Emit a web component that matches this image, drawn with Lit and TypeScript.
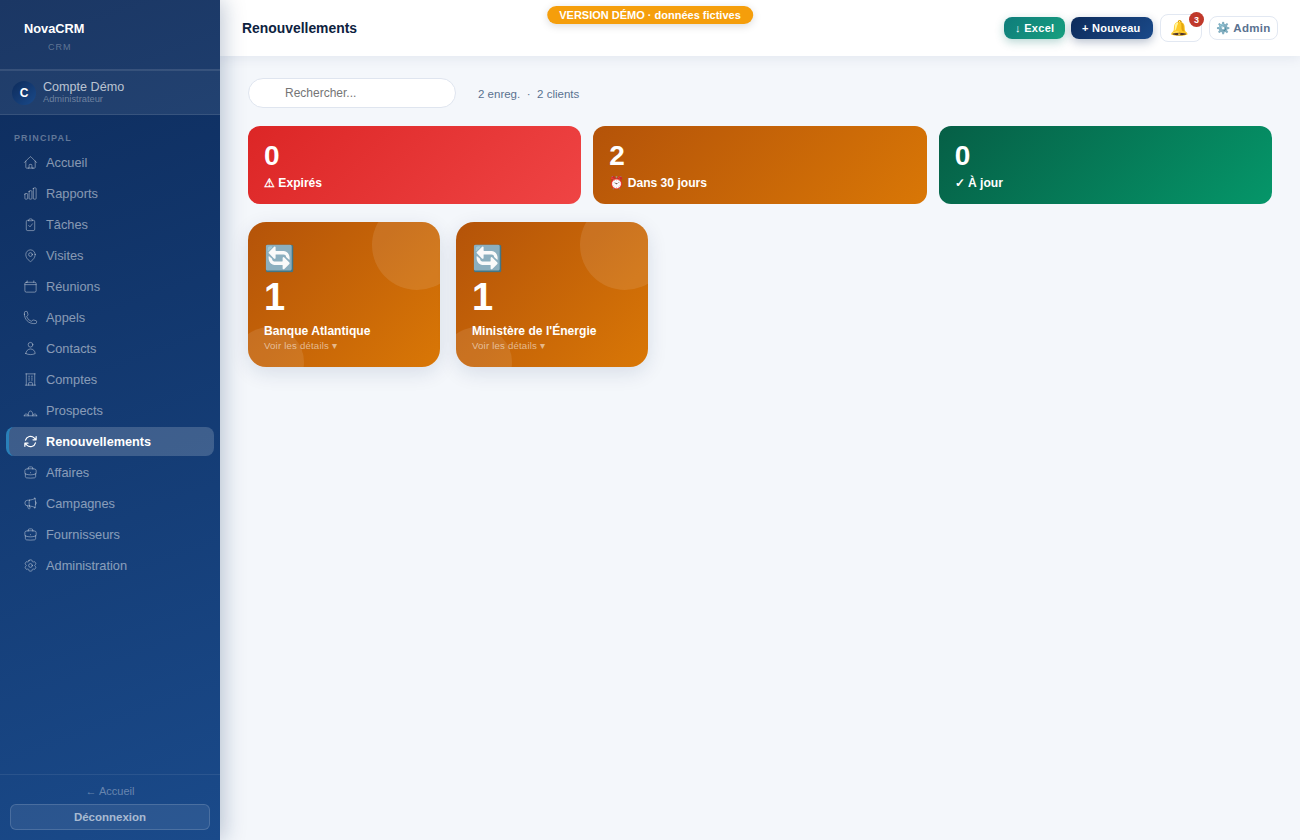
import { LitElement, html, css } from 'lit';
import { customElement } from 'lit/decorators.js';

const ICONS: Record<string, string> = {
  home: 'M2.25 12l8.954-8.955c.44-.439 1.152-.439 1.591 0L21.75 12M4.5 9.75v10.125c0 .621.504 1.125 1.125 1.125H9.75v-4.875c0-.621.504-1.125 1.125-1.125h2.25c.621 0 1.125.504 1.125 1.125V21h4.125c.621 0 1.125-.504 1.125-1.125V9.75M8.25 21h8.25',
  chart: 'M3 13.125C3 12.504 3.504 12 4.125 12h2.25c.621 0 1.125.504 1.125 1.125v6.75C7.5 20.496 6.996 21 6.375 21h-2.25A1.125 1.125 0 013 19.875v-6.75zM9.75 8.625c0-.621.504-1.125 1.125-1.125h2.25c.621 0 1.125.504 1.125 1.125v11.25c0 .621-.504 1.125-1.125 1.125h-2.25a1.125 1.125 0 01-1.125-1.125V8.625zM16.5 4.125c0-.621.504-1.125 1.125-1.125h2.25C20.496 3 21 3.504 21 4.125v15.75c0 .621-.504 1.125-1.125 1.125h-2.25a1.125 1.125 0 01-1.125-1.125V4.125z',
  clipboard: 'M9 13.5l2.25 2.25L15 11M9 5.25H7.5A2.25 2.25 0 005.25 7.5v12A2.25 2.25 0 007.5 21.75h9a2.25 2.25 0 002.25-2.25v-12A2.25 2.25 0 0016.5 5.25H15M9 5.25A2.25 2.25 0 0111.25 3h1.5A2.25 2.25 0 0115 5.25v.75H9z',
  pin: 'M15 10.5a3 3 0 11-6 0 3 3 0 016 0zM19.5 10.5c0 7.142-7.5 11.25-7.5 11.25S4.5 17.642 4.5 10.5a7.5 7.5 0 1115 0z',
  calendar: 'M6.75 3v2.25M17.25 3v2.25M3 9h18M5.25 5.25h13.5A2.25 2.25 0 0121 7.5v11.25A2.25 2.25 0 0118.75 21H5.25A2.25 2.25 0 013 18.75V7.5a2.25 2.25 0 012.25-2.25z',
  phone: 'M2.25 6.75c0 8.284 6.716 15 15 15h2.25a2.25 2.25 0 002.25-2.25v-1.372c0-.516-.351-.966-.852-1.091l-4.423-1.106c-.44-.11-.902.055-1.173.417l-.97 1.293c-.282.376-.769.542-1.21.38a12.035 12.035 0 01-7.143-7.143c-.162-.441.004-.928.38-1.21l1.293-.97c.363-.271.527-.734.417-1.173L6.963 3.102a1.125 1.125 0 00-1.091-.852H4.5A2.25 2.25 0 002.25 4.5v2.25z',
  user: 'M15.75 6a3.75 3.75 0 11-7.5 0 3.75 3.75 0 017.5 0zM4.501 20.118a7.5 7.5 0 0114.998 0A17.933 17.933 0 0112 21.75c-2.676 0-5.216-.584-7.499-1.632z',
  building: 'M3.75 21h16.5M4.5 3h15M5.25 3v18m13.5-18v18M9 6.75h1.5m-1.5 3h1.5m-1.5 3h1.5m3-6H15m-1.5 3H15m-1.5 3H15M9 21v-3.375c0-.621.504-1.125 1.125-1.125h3.75c.621 0 1.125.504 1.125 1.125V21',
  prospects: 'M2 20.5c0-1.8 1.3-2.9 3-2.9 1.2 0 2.2.4 3.2 1.2M22 20.5c0-1.8-1.3-2.9-3-2.9-1.2 0-2.2.4-3.2 1.2M8.2 20.5c0-5 1.5-7.7 3.8-7.7s3.8 2.7 3.8 7.7M2 20.5h20',
  refresh: 'M16.023 9.348h4.992v-.001M2.985 19.644v-4.992m0 0h4.992m-4.993 0l3.181 3.183a8.25 8.25 0 0013.803-3.7M4.031 9.865a8.25 8.25 0 0113.803-3.7l3.181 3.182m0-4.991v4.99',
  briefcase: 'M20.25 14.15v4.25c0 1.094-.787 2.036-1.872 2.18-2.087.277-4.216.42-6.378.42s-4.291-.143-6.378-.42c-1.085-.144-1.872-1.086-1.872-2.18v-4.25m16.5 0a2.18 2.18 0 00.75-1.661V8.706c0-1.081-.768-2.015-1.837-2.175a48.114 48.114 0 00-3.413-.387m4.5 8.006c-.194.165-.42.295-.673.38A23.978 23.978 0 0112 15.75c-2.648 0-5.195-.429-7.577-1.22a2.016 2.016 0 01-.673-.38m0 0A2.18 2.18 0 013 12.489V8.706c0-1.081.768-2.015 1.837-2.175a48.111 48.111 0 013.413-.387m7.5 0V5.25A2.25 2.25 0 0013.5 3h-3a2.25 2.25 0 00-2.25 2.25v.894m7.5 0a48.667 48.667 0 00-7.5 0M12 12.75h.008v.008H12v-.008z',
  megaphone: 'M10.34 15.84c-.688-.06-1.386-.09-2.09-.09H7.5a4.5 4.5 0 110-9h.75c.704 0 1.402-.03 2.09-.09m0 9.18c.253.962.584 1.892.985 2.783.247.55.06 1.21-.463 1.511l-.657.38c-.551.318-1.26.117-1.527-.461a20.845 20.845 0 01-1.44-4.282m3.102.069a18.03 18.03 0 01-.59-4.59c0-1.586.205-3.124.59-4.59m0 9.18a23.848 23.848 0 018.835 2.535M10.34 6.66a23.847 23.847 0 008.835-2.535m0 0A23.74 23.74 0 0018.795 3m.38 1.125a23.91 23.91 0 011.014 5.395m-1.014 8.855c-.118.38-.245.754-.38 1.125m.38-1.125a23.91 23.91 0 001.014-5.395m0-3.46c.495.413.811 1.035.811 1.73 0 .695-.316 1.317-.811 1.73m0-3.46a24.347 24.347 0 010 3.46',
  cog: 'M9.594 3.94c.09-.542.56-.94 1.11-.94h2.593c.55 0 1.02.398 1.11.94l.213 1.281c.063.374.313.686.645.87.074.04.147.083.22.127.324.196.72.257 1.075.124l1.217-.456a1.125 1.125 0 011.37.49l1.296 2.247a1.125 1.125 0 01-.26 1.431l-1.003.827c-.293.24-.438.613-.431.992a6.759 6.759 0 010 .255c-.007.378.138.75.43.99l1.005.828c.424.35.534.954.26 1.43l-1.298 2.247a1.125 1.125 0 01-1.369.491l-1.217-.456c-.355-.133-.75-.072-1.076.124a6.57 6.57 0 01-.22.128c-.331.183-.581.495-.644.869l-.213 1.28c-.09.543-.56.941-1.11.941h-2.594c-.55 0-1.02-.398-1.11-.94l-.213-1.281c-.062-.374-.312-.686-.644-.87a6.52 6.52 0 01-.22-.127c-.325-.196-.72-.257-1.076-.124l-1.217.456a1.125 1.125 0 01-1.369-.49l-1.297-2.247a1.125 1.125 0 01.26-1.431l1.004-.827c.292-.24.437-.613.43-.992a6.932 6.932 0 010-.255c.007-.378-.138-.75-.43-.99l-1.004-.828a1.125 1.125 0 01-.26-1.43l1.297-2.247a1.125 1.125 0 011.37-.491l1.216.456c.356.133.751.072 1.076-.124.072-.044.146-.087.22-.128.332-.183.582-.495.644-.869l.214-1.281zM15 12a3 3 0 11-6 0 3 3 0 016 0z',
};

const NAV = [
  ['Accueil', 'home'],
  ['Rapports', 'chart'],
  ['Tâches', 'clipboard'],
  ['Visites', 'pin'],
  ['Réunions', 'calendar'],
  ['Appels', 'phone'],
  ['Contacts', 'user'],
  ['Comptes', 'building'],
  ['Prospects', 'prospects'],
  ['Renouvellements', 'refresh'],
  ['Affaires', 'briefcase'],
  ['Campagnes', 'megaphone'],
  ['Fournisseurs', 'briefcase'],
  ['Administration', 'cog'],
];

const STATS = [
  ['0', '⚠ Expirés', 'red'],
  ['2', '⏰ Dans 30 jours', 'amber'],
  ['0', '✓ À jour', 'green'],
];

const CLIENTS = [
  ['1', 'Banque Atlantique'],
  ['1', "Ministère de l'Énergie"],
];

@customElement('app-root')
export class AppRoot extends LitElement {
  static styles = css`
    :host {
      display: flex;
      height: 100vh;
      background: #f4f7fb;
      font-family: 'Liberation Sans', Arial, sans-serif;
      color: #0f2447;
      overflow: hidden;
      position: relative;
    }

    * {
      box-sizing: border-box;
    }

    .sidebar {
      width: 220px;
      flex: none;
      display: flex;
      flex-direction: column;
      background: linear-gradient(160deg, #0d2b5b 0%, #1a4a8a 100%);
      box-shadow: 4px 0 20px rgba(13, 43, 91, 0.25);
      z-index: 2;
    }

    .brand {
      height: 70px;
      padding: 21px 24px 0;
      background: rgba(255, 255, 255, 0.06);
      border-bottom: 1px solid rgba(255, 255, 255, 0.12);
    }

    .brand-name {
      font-size: 12.8px;
      line-height: 15px;
      font-weight: 700;
      color: #fff;
    }

    .brand-sub {
      margin: 6px 0 0 24px;
      font-size: 9px;
      line-height: 11px;
      letter-spacing: 1px;
      color: rgba(255, 255, 255, 0.3);
    }

    .account {
      height: 45px;
      display: flex;
      align-items: center;
      gap: 7px;
      padding: 0 12px;
      background: rgba(255, 255, 255, 0.08);
      border-top: 1px solid rgba(255, 255, 255, 0.1);
      border-bottom: 1px solid rgba(255, 255, 255, 0.1);
    }

    .avatar {
      width: 24px;
      height: 24px;
      border-radius: 50%;
      flex: none;
      display: flex;
      align-items: center;
      justify-content: center;
      font-size: 12px;
      font-weight: 700;
      color: #fff;
      background: linear-gradient(135deg, #0d2b5b, #1a4a8a);
    }

    .account-name {
      font-size: 12.6px;
      line-height: 13px;
      color: rgba(255, 255, 255, 0.7);
    }

    .account-role {
      font-size: 9.3px;
      line-height: 10px;
      color: rgba(255, 255, 255, 0.35);
    }

    .section {
      padding: 18px 14px 4px;
      font-size: 9px;
      line-height: 11px;
      font-weight: 700;
      letter-spacing: 1.1px;
      color: rgba(255, 255, 255, 0.35);
    }

    nav {
      flex: 1;
      display: flex;
      flex-direction: column;
      gap: 2px;
      padding: 0 6px;
    }

    .item {
      height: 29px;
      display: flex;
      align-items: center;
      gap: 8px;
      padding: 0 17px;
      border-radius: 8px;
      font-size: 12.8px;
      color: rgba(255, 255, 255, 0.5);
    }

    .item svg {
      width: 15px;
      height: 15px;
      flex: none;
      fill: none;
      stroke: currentColor;
      stroke-width: 1.6;
      stroke-linecap: round;
      stroke-linejoin: round;
      opacity: 0.8;
    }

    .item.active {
      background: rgba(255, 255, 255, 0.18);
      border-left: 3px solid #2980b9;
      padding-left: 14px;
      font-size: 12.7px;
      color: #fff;
      font-weight: 700;
    }

    .item.active svg {
      opacity: 1;
      stroke-width: 2;
    }

    .foot {
      border-top: 1px solid rgba(255, 255, 255, 0.08);
      padding: 10px;
      text-align: center;
    }

    .back {
      font-size: 11px;
      line-height: 13px;
      color: rgba(255, 255, 255, 0.35);
      margin-bottom: 6px;
    }

    .logout {
      height: 26px;
      display: flex;
      align-items: center;
      justify-content: center;
      border-radius: 6px;
      border: 1px solid rgba(255, 255, 255, 0.15);
      background: rgba(255, 255, 255, 0.08);
      font-size: 11.5px;
      font-weight: 700;
      color: rgba(255, 255, 255, 0.6);
    }

    .main {
      flex: 1;
      min-width: 0;
      display: flex;
      flex-direction: column;
    }

    .topbar {
      height: 56px;
      flex: none;
      display: flex;
      align-items: center;
      padding: 0 22px;
      background: #fff;
      box-shadow: 0 2px 12px rgba(13, 43, 91, 0.08);
    }

    h1 {
      margin: 0;
      flex: 1;
      font-size: 13.9px;
      font-weight: 700;
      color: #0d2240;
    }

    .actions {
      display: flex;
      align-items: center;
      gap: 6px;
    }

    .btn {
      height: 22px;
      display: flex;
      align-items: center;
      padding: 0 11px;
      border-radius: 8px;
      font-size: 11px;
      font-weight: 700;
      letter-spacing: 0.3px;
      white-space: nowrap;
      color: #fff;
    }

    .excel {
      width: 61px;
      background: linear-gradient(135deg, #0e7c7b, #17a07f);
      box-shadow: 0 3px 10px rgba(15, 118, 110, 0.3);
    }

    .new {
      width: 82px;
      background: linear-gradient(135deg, #0d2b5b, #1a4a8a);
      box-shadow: 0 3px 10px rgba(13, 43, 91, 0.3);
    }

    .bell {
      position: relative;
      width: 42px;
      height: 28px;
      margin-left: 1px;
      padding-right: 4px;
      display: flex;
      align-items: center;
      justify-content: center;
      border-radius: 8px;
      border: 1px solid #e2e8f2;
      background: #fff;
      font-size: 15px;
    }

    .count {
      position: absolute;
      top: -3px;
      right: -3px;
      width: 15px;
      height: 15px;
      border-radius: 50%;
      display: flex;
      align-items: center;
      justify-content: center;
      background: #c0392b;
      font-size: 9px;
      font-weight: 700;
      color: #fff;
    }

    .admin {
      width: 69px;
      height: 24px;
      display: flex;
      align-items: center;
      margin-left: 1px;
      padding: 0 6px;
      border-radius: 8px;
      border: 1px solid #e2e8f2;
      background: #fff;
      font-size: 11.5px;
      font-weight: 700;
      letter-spacing: 0.3px;
      white-space: nowrap;
      color: #5a7290;
    }

    .demo {
      position: absolute;
      top: 6px;
      left: 50%;
      transform: translateX(-50%);
      height: 18px;
      display: flex;
      align-items: center;
      padding: 0 12px;
      border-radius: 9px;
      background: #f59e0b;
      box-shadow: 0 2px 8px rgba(0, 0, 0, 0.15);
      font-size: 11px;
      font-weight: 700;
      white-space: nowrap;
      color: #fff;
      z-index: 3;
    }

    .content {
      flex: 1;
      padding: 22px 28px;
    }

    .filters {
      display: flex;
      align-items: center;
      gap: 22px;
      margin-bottom: 18px;
    }

    .search {
      width: 208px;
      height: 30px;
      display: flex;
      align-items: center;
      padding-left: 36px;
      border-radius: 15px;
      border: 1px solid #dfe5ef;
      background: #fff;
      font-size: 12px;
      color: #757575;
    }

    .meta {
      display: flex;
      gap: 6.5px;
      font-size: 11.5px;
      padding-top: 2px;
      color: #5a7290;
    }

    .stats {
      display: grid;
      grid-template-columns: repeat(3, 1fr);
      gap: 12px;
      margin-bottom: 18px;
    }

    .stat {
      height: 78px;
      padding: 14px 16px;
      border-radius: 12px;
      color: #fff;
    }

    .stat.red {
      background: linear-gradient(135deg, #dc2626, #ef4444);
    }

    .stat.amber {
      background: linear-gradient(135deg, #b45309, #d97706);
    }

    .stat.green {
      background: linear-gradient(135deg, #065f46, #059669);
    }

    .stat-num {
      font-size: 28px;
      line-height: 32px;
      font-weight: 700;
    }

    .stat-label {
      margin-top: 4px;
      font-size: 12.1px;
      line-height: 15px;
      font-weight: 700;
    }

    .clients {
      display: flex;
      gap: 16px;
    }

    .client {
      position: relative;
      overflow: hidden;
      width: 192px;
      height: 145px;
      padding: 20px 16px 0;
      border-radius: 18px;
      color: #fff;
      background: linear-gradient(135deg, #b45309, #d97706);
      box-shadow: 0 6px 20px rgba(13, 43, 91, 0.12);
    }

    .client::before,
    .client::after {
      content: '';
      position: absolute;
      border-radius: 50%;
      background: rgba(255, 255, 255, 0.1);
    }

    .client::before {
      width: 90px;
      height: 90px;
      top: -22px;
      right: -22px;
    }

    .client::after {
      width: 70px;
      height: 70px;
      bottom: -30px;
      left: -14px;
    }

    .client-icon {
      font-size: 25px;
      line-height: 32px;
    }

    .client-num {
      margin-top: 1px;
      font-size: 38px;
      line-height: 44px;
      font-weight: 700;
    }

    .client-name {
      margin-top: 5px;
      font-size: 12.1px;
      line-height: 15px;
      font-weight: 700;
    }

    .client-more {
      margin-top: 1px;
      font-size: 9.6px;
      line-height: 12px;
      letter-spacing: 0.2px;
      color: rgba(255, 255, 255, 0.55);
    }
  `;

  render() {
    return html`
      <aside class="sidebar">
        <div class="brand">
          <div class="brand-name">NovaCRM</div>
          <div class="brand-sub">CRM</div>
        </div>
        <div class="account">
          <div class="avatar">C</div>
          <div>
            <div class="account-name">Compte Démo</div>
            <div class="account-role">Administrateur</div>
          </div>
        </div>
        <div class="section">PRINCIPAL</div>
        <nav>
          ${NAV.map(([label, icon]) => html`
            <div class="item ${label === 'Renouvellements' ? 'active' : ''}">
              <svg viewBox="0 0 24 24"><path d=${ICONS[icon]}></path></svg>
              ${label}
            </div>
          `)}
        </nav>
        <div class="foot">
          <div class="back">← Accueil</div>
          <div class="logout">Déconnexion</div>
        </div>
      </aside>
      <div class="main">
        <header class="topbar">
          <h1>Renouvellements</h1>
          <div class="actions">
            <div class="btn excel">↓ Excel</div>
            <div class="btn new">+ Nouveau</div>
            <div class="bell">🔔<span class="count">3</span></div>
            <div class="admin">⚙️ Admin</div>
          </div>
        </header>
        <div class="content">
          <div class="filters">
            <div class="search">Rechercher...</div>
            <div class="meta"><span>2 enreg.</span><span>·</span><span>2 clients</span></div>
          </div>
          <div class="stats">
            ${STATS.map(([num, label, tone]) => html`
              <div class="stat ${tone}">
                <div class="stat-num">${num}</div>
                <div class="stat-label">${label}</div>
              </div>
            `)}
          </div>
          <div class="clients">
            ${CLIENTS.map(([num, name]) => html`
              <div class="client">
                <div class="client-icon">🔄</div>
                <div class="client-num">${num}</div>
                <div class="client-name">${name}</div>
                <div class="client-more">Voir les détails ▾</div>
              </div>
            `)}
          </div>
        </div>
      </div>
      <div class="demo">VERSION DÉMO · données fictives</div>
    `;
  }
}
